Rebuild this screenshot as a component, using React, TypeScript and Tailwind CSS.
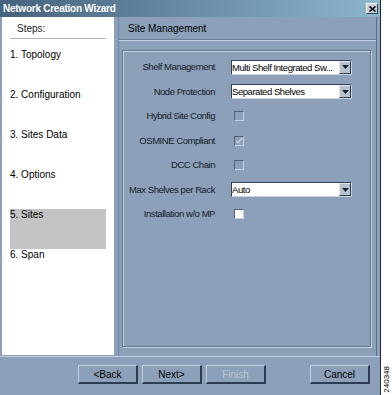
import React from "react";

const STEPS = ["1. Topology", "2. Configuration", "3. Sites Data", "4. Options", "5. Sites", "6. Span"];

function Combo({ value }: { value: string }) {
    return (
        <div className="flex items-stretch w-[121px] h-[15px] bg-white border-t border-l border-[#2f4157] border-b border-r border-b-[#c9d4e0] border-r-[#c9d4e0]">
            <div className="flex-1 min-w-0 overflow-hidden whitespace-nowrap text-[9.5px] leading-[13px] text-black tracking-[-0.45px]">
                {value}
            </div>
            <div className="w-[12px] flex items-center justify-center bg-[#b8c3d1] border-t border-l border-[#e4e9ef] border-b border-r border-b-[#2b3b50] border-r-[#2b3b50]">
                <svg width="7" height="4" viewBox="0 0 7 4">
                    <path d="M0 0h7L3.5 4z" fill="#1b2430" />
                </svg>
            </div>
        </div>
    );
}

function Check({ checked, enabled }: { checked?: boolean; enabled?: boolean }) {
    return (
        <div
            className={
                "ml-[3px] w-[10px] h-[10px] flex items-center justify-center border-t border-l border-[#4f6179] border-b border-r border-b-[#c3cfdc] border-r-[#c3cfdc] " +
                (enabled ? "bg-white" : "bg-transparent")
            }
        >
            {checked ? (
                <svg width="8" height="8" viewBox="0 0 8 8">
                    <path d="M1 4l2 2 4-5" fill="none" stroke="#c6d0dc" strokeWidth="1.4" />
                </svg>
            ) : null}
        </div>
    );
}

function Btn({ label, disabled }: { label: string; disabled?: boolean }) {
    return (
        <div
            className={
                "w-[60px] h-[19px] flex items-center justify-center text-[10px] border-t border-l border-[#c4d0dd] border-b-2 border-r-2 border-b-[#2c3d53] border-r-[#2c3d53] " +
                (disabled ? "text-[#bac6d4]" : "text-black")
            }
        >
            {label}
        </div>
    );
}

const ROWS: { label: string; ctrl: React.ReactNode }[] = [
    { label: "Shelf Management", ctrl: <Combo value="Multi Shelf Integrated Sw..." /> },
    { label: "Node Protection", ctrl: <Combo value="Separated Shelves" /> },
    { label: "Hybrid Site Config", ctrl: <Check /> },
    { label: "OSMINE Compliant", ctrl: <Check checked /> },
    { label: "DCC Chain", ctrl: <Check /> },
    { label: "Max Shelves per Rack", ctrl: <Combo value="Auto" /> },
    { label: "Installation w/o MP", ctrl: <Check enabled /> },
];

export default function App() {
    return (
        <div className="w-[392px] h-[395px] bg-white flex font-['Liberation_Sans',sans-serif] text-black">
            <div className="w-[381px] h-full flex flex-col bg-[#8ca0b9] border-r border-[#1f2b3a]">
                {/* title bar */}
                <div className="h-[17px] flex items-center justify-between pl-[3px] pr-[2px] bg-gradient-to-r from-[#46637d] via-[#6a8ca6] to-[#8cb6cd]">
                    <span className="text-white font-bold text-[10px] tracking-[-0.25px]">Network Creation Wizard</span>
                    <div className="w-[12px] h-[11px] flex items-center justify-center bg-[#c9ced6] border-t border-l border-white border-b border-r border-b-[#33404f] border-r-[#33404f]">
                        <svg width="7" height="6" viewBox="0 0 7 6">
                            <path d="M0.5 0.5l6 5M6.5 0.5l-6 5" stroke="#000" strokeWidth="1.6" />
                        </svg>
                    </div>
                </div>

                <div className="flex h-[339px]">
                    {/* steps */}
                    <div className="ml-[2px] w-[112px] h-[338px] bg-white flex flex-col">
                        <div className="h-[21px] pt-[6px] pl-[15px] text-[10px] leading-[12px] text-[#222]">Steps:</div>
                        <div className="mx-[8px] h-px bg-[#b4b4b4]" />
                        <div className="pt-[10px] flex flex-col">
                            {STEPS.map((s, i) => (
                                <div
                                    key={s}
                                    className={
                                        "ml-[8px] w-[96px] h-[40px] text-[10px] leading-[12px] " +
                                        (i === 4 ? "bg-[#c4c4c4]" : "")
                                    }
                                >
                                    {s}
                                </div>
                            ))}
                        </div>
                    </div>
                    <div className="w-[4px]" />

                    {/* content */}
                    <div className="w-[259px] flex flex-col border-l border-[#71849c] border-r border-r-[#5e7189]">
                        <div className="h-[22px] pt-[6px] pl-[9px] text-[10px] leading-[12px]">Site Management</div>
                        <div className="h-[2px] border-t border-[#6c7f97] border-b border-b-[#c0cedd]" />
                        <div className="mt-[9px] ml-[3px] mr-[5px] h-[297px] border border-[#66798f] shadow-[inset_1px_1px_0_#c3d0de,1px_1px_0_#c3d0de]">
                            <div className="pt-[4px] grid grid-cols-[92px_1fr] gap-x-[16px]">
                                {ROWS.map((r) => (
                                    <React.Fragment key={r.label}>
                                        <div className="h-[24.5px] flex items-center justify-end text-[9.5px] tracking-[-0.45px] whitespace-nowrap text-[#141c28]">
                                            {r.label}
                                        </div>
                                        <div className="h-[24.5px] flex items-center">{r.ctrl}</div>
                                    </React.Fragment>
                                ))}
                            </div>
                        </div>
                    </div>
                </div>

                {/* buttons */}
                <div className="flex-1 border-t border-[#c2cfdd] flex items-start pt-[8px] pl-[78px]">
                    <div className="flex gap-[4px]">
                        <Btn label="<Back" />
                        <Btn label="Next>" />
                        <Btn label="Finish" disabled />
                    </div>
                    <div className="ml-[44px]">
                        <Btn label="Cancel" />
                    </div>
                </div>
            </div>
            <div className="flex-1 flex items-end justify-center pb-[2px]">
                <div className="[writing-mode:vertical-rl] rotate-180 text-[8px] leading-[9px]">240348</div>
            </div>
        </div>
    );
}
